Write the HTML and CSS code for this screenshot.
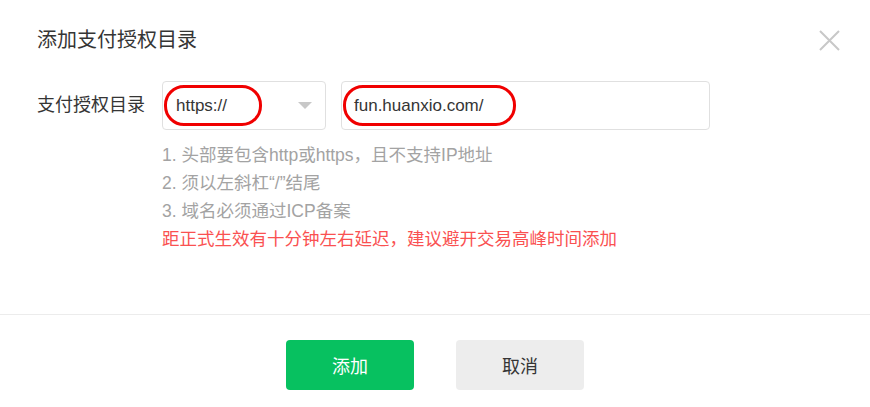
FILE: index.html
```html
<!DOCTYPE html>
<html lang="zh-CN">
<head>
<meta charset="utf-8">
<title>添加支付授权目录</title>
<link rel="stylesheet" href="styles.css">
</head>
<body>
<div class="dialog">
  <div class="header">
    <div class="title">添加支付授权目录</div>
    <svg class="close" width="21" height="21" viewBox="0 0 21 21"><path d="M1 1L20 20M20 1L1 20" stroke="#c8c8c8" stroke-width="2" fill="none"/></svg>
  </div>
  <div class="form-row">
    <div class="label">支付授权目录</div>
    <div class="select">
      <span class="value">https://</span>
      <span class="arrow"></span>
      <span class="mark mark-select"></span>
    </div>
    <div class="input">
      <span class="value">fun.huanxio.com/</span>
      <span class="mark mark-input"></span>
    </div>
  </div>
  <div class="tips">
    <div class="tip">1. 头部要包含http或https，且不支持IP地址</div>
    <div class="tip">2. 须以左斜杠“/”结尾</div>
    <div class="tip">3. 域名必须通过ICP备案</div>
    <div class="tip warn">距正式生效有十分钟左右延迟，建议避开交易高峰时间添加</div>
  </div>
  <div class="footer">
    <button class="btn primary">添加</button>
    <button class="btn default">取消</button>
  </div>
</div>
</body>
</html>
```

FILE: styles.css
```css
html, body {
  margin: 0;
  padding: 0;
  background: #fff;
}
body {
  font-family: "Liberation Sans", "Noto Sans CJK SC", sans-serif;
  color: #353535;
}
.dialog {
  width: 870px;
  height: 407px;
  box-sizing: border-box;
}
.header {
  display: flex;
  align-items: center;
  justify-content: space-between;
  padding: 28px 30px 0 37px;
  height: 24px;
}
.title {
  font-size: 20px;
  line-height: 24px;
  color: #353535;
}
.close {
  display: block;
}
.form-row {
  display: flex;
  align-items: center;
  margin-top: 29px;
  padding-left: 37px;
}
.label {
  width: 125px;
  font-size: 18px;
  line-height: 49px;
  color: #353535;
}
.select, .input {
  position: relative;
  box-sizing: border-box;
  height: 49px;
  border: 1px solid #e0e0e0;
  border-radius: 4px;
  display: flex;
  align-items: center;
  font-size: 17px;
  color: #353535;
}
.select {
  width: 164px;
  padding-left: 13px;
  justify-content: space-between;
  padding-right: 13px;
}
.arrow {
  width: 0;
  height: 0;
  border-left: 7px solid transparent;
  border-right: 7px solid transparent;
  border-top: 7px solid #c8c8c8;
}
.input {
  width: 369px;
  margin-left: 15px;
  padding-left: 12px;
}
.mark {
  position: absolute;
  box-sizing: border-box;
  border: 3px solid #f00000;
  border-radius: 20px;
  top: 3px;
  height: 41px;
}
.mark-select {
  left: 1px;
  width: 98px;
}
.mark-input {
  left: 1px;
  width: 173px;
}
.tips {
  margin-top: 11px;
  padding-left: 162px;
  font-size: 17.5px;
  line-height: 28px;
  color: #a3a3a3;
}
.warn {
  color: #fa5151;
}
.footer {
  margin-top: 61px;
  border-top: 1px solid #ececec;
  padding-top: 25px;
  display: flex;
  justify-content: center;
  gap: 42px;
}
.btn {
  width: 128px;
  height: 50px;
  border: none;
  border-radius: 4px;
  font-family: "Noto Sans CJK SC", sans-serif;
  font-size: 18px;
  padding: 0;
}
.primary {
  background: #07c160;
  color: #fff;
}
.default {
  background: #ededed;
  color: #353535;
}
```
